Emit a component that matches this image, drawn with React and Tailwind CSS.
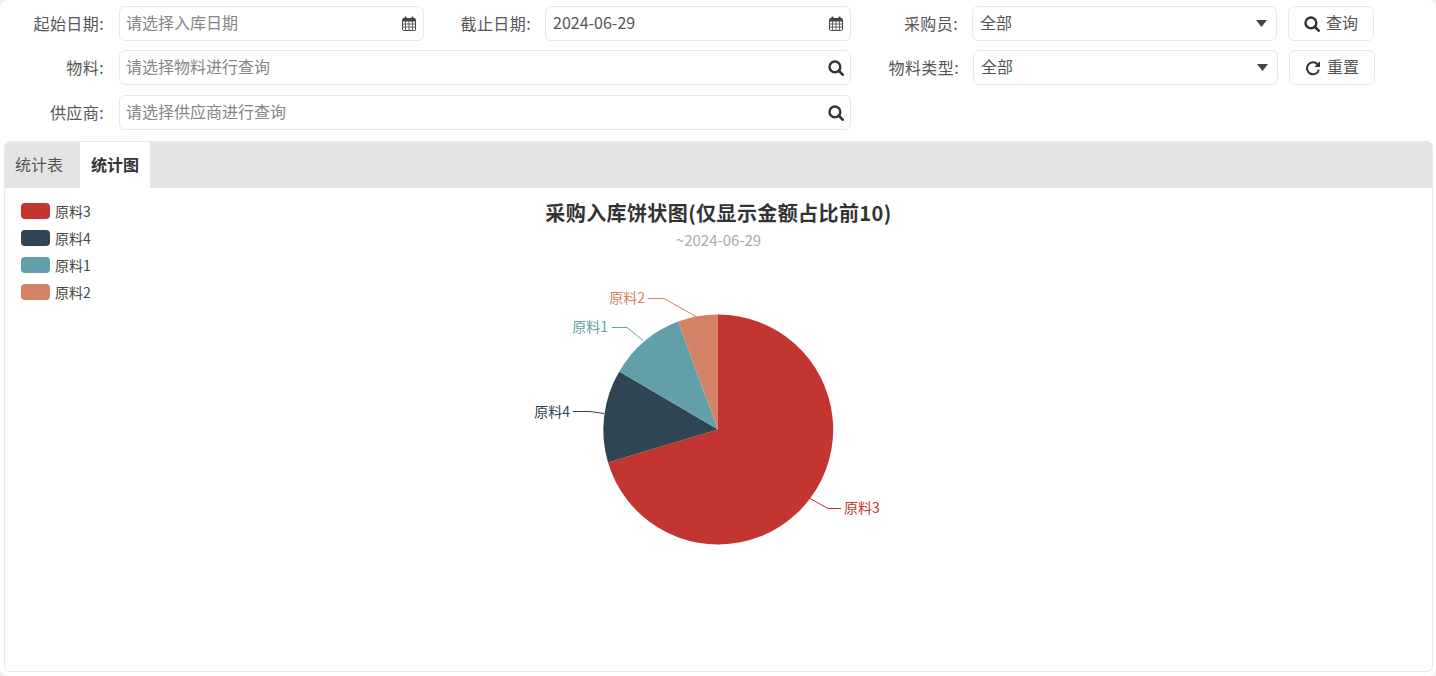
import React from 'react';

const fontStack = { fontFamily: '"Noto Sans CJK SC", "Liberation Sans", sans-serif' };

const legendItems = [
  { name: '原料3', color: '#c23531' },
  { name: '原料4', color: '#2f4554' },
  { name: '原料1', color: '#61a0a8' },
  { name: '原料2', color: '#d48265' },
];

const Label = ({ text, className = 'w-[104px]' }) => (
  <label className={`${className} shrink-0 mb-[2px] text-right text-[16px] tracking-[0.4px] text-[#555]`}>{text}:</label>
);

const Field = ({ value, placeholder, icon, className = '' }) => (
  <div className={`h-[35px] flex items-center justify-between pl-[6px] pr-[6px] bg-white border border-[#e8e8e8] rounded-[6px] ${className}`}>
    <span className={`mb-[3px] text-[16px] ${value ? 'ml-[1px] text-[#555]' : 'text-[#858585]'}`}>{value || placeholder}</span>
    {icon}
  </div>
);

const Caret = () => (
  <svg width="11" height="7" viewBox="0 0 11 7" className="mr-[3px]">
    <path d="M0 0 H11 L5.5 7 Z" fill="#444" />
  </svg>
);

const Calendar = () => (
  <svg width="14" height="15" viewBox="0 0 14 15" className="mr-[1px]">
    <rect x="0.5" y="2.5" width="13" height="12" rx="1" fill="#fff" stroke="#444" />
    <rect x="1" y="2.5" width="12" height="3" fill="#444" />
    <path d="M0.5 8 H13.5 M0.5 11 H13.5 M3.5 5 V14.5 M7 5 V14.5 M10.5 5 V14.5" stroke="#555" strokeWidth="0.9" fill="none" />
    <rect x="2.5" y="0.5" width="2" height="3.5" rx="0.8" fill="#444" />
    <rect x="9.5" y="0.5" width="2" height="3.5" rx="0.8" fill="#444" />
  </svg>
);

// font-awesome 4 style search, ring thicker than the one in the icon packages
const SearchIcon = () => (
  <svg width="16" height="16" viewBox="0 0 16 16">
    <circle cx="6.9" cy="6.9" r="5.4" fill="none" stroke="#333" strokeWidth="2.4" />
    <path d="M11 11 L14.7 14.7" stroke="#333" strokeWidth="2.6" strokeLinecap="round" />
  </svg>
);

const RedoIcon = () => (
  <svg width="16" height="16" viewBox="0 0 16 16">
    <path d="M12.6 4.4 A6 6 0 1 0 13.9 9.6" fill="none" stroke="#333" strokeWidth="2" />
    <path d="M15 1.2 V7 H9.4 Z" fill="#333" />
  </svg>
);

const Btn = ({ icon, text, className = '' }) => (
  <button className={`h-[35px] w-[86px] flex items-center justify-center gap-[6px] bg-white border border-[#e8e8e8] rounded-[6px] text-[#555] ${className}`}>
    {icon}
    <span className="mb-[3px] text-[16px]">{text}</span>
  </button>
);

const Pie = () => (
  <svg width="401" height="300" viewBox="0 0.5 401 300" className="block mx-auto mt-[22px]">
    <path d="M200 158 L200 43 A115 115 0 1 1 90 191 Z" fill="#c23531" />
    <path d="M200 158 L90 191 A115 115 0 0 1 101.3 100 Z" fill="#2f4554" />
    <path d="M200 158 L101.3 100 A115 115 0 0 1 160 50 Z" fill="#61a0a8" />
    <path d="M200 158 L160 50 A115 115 0 0 1 200 43 Z" fill="#d48265" />

    <path d="M292 227 L310 237 H323" fill="none" stroke="#c23531" />
    <path d="M86 142 L72 140 H55" fill="none" stroke="#2f4554" />
    <path d="M125 69 L109 56 H94" fill="none" stroke="#61a0a8" />
    <path d="M178 45 L146 27 H130" fill="none" stroke="#d48265" />

    <text x="326" y="241" fontSize="14" fill="#c23531">原料3</text>
    <text x="52" y="145" fontSize="14" fill="#2f4554" textAnchor="end">原料4</text>
    <text x="90" y="60" fontSize="14" fill="#61a0a8" textAnchor="end">原料1</text>
    <text x="127" y="31" fontSize="14" fill="#d48265" textAnchor="end">原料2</text>
  </svg>
);

const App = () => {
  return (
    <div style={fontStack} className="w-[1436px] h-[676px] overflow-hidden bg-[#f0f0f0]">
      <div className="h-full bg-white rounded-[8px] overflow-hidden">
        <div className="pt-[6px] flex flex-col gap-[9px]">
          <div className="flex items-center">
            <Label text="起始日期" />
            <Field placeholder="请选择入库日期" icon={<Calendar />} className="w-[305px] ml-[15px]" />
            <Label text="截止日期" className="w-[107px]" />
            <Field value="2024-06-29" icon={<Calendar />} className="w-[306px] ml-[14px]" />
            <Label text="采购员" className="w-[107px]" />
            <Field value="全部" icon={<Caret />} className="w-[305px] ml-[14px]" />
            <Btn icon={<SearchIcon />} text="查询" className="ml-[11px]" />
          </div>
          <div className="flex items-center">
            <Label text="物料" />
            <Field placeholder="请选择物料进行查询" icon={<SearchIcon />} className="w-[732px] ml-[15px]" />
            <Label text="物料类型" className="w-[108px]" />
            <Field value="全部" icon={<Caret />} className="w-[305px] ml-[14px]" />
            <Btn icon={<RedoIcon />} text="重置" className="ml-[11px]" />
          </div>
          <div className="flex items-center mt-[1px]">
            <Label text="供应商" />
            <Field placeholder="请选择供应商进行查询" icon={<SearchIcon />} className="w-[732px] ml-[15px]" />
          </div>
        </div>

        <div className="mx-[4px] mt-[11px] h-[531px] w-[1429px] border border-[#e8e8e8] rounded-[6px] overflow-hidden">
          <div className="h-[46px] flex bg-[#e4e4e4]">
            <div className="w-[75px] flex items-center pl-[10px] text-[16px] text-[#555]"><span className="mb-[2px]">统计表</span></div>
            <div className="w-[70px] flex items-center justify-center bg-white text-[16px] font-bold text-[#333]"><span className="mb-[2px]">统计图</span></div>
          </div>
          <div className="relative pt-[12px]">
            <h2 className="text-center text-[20px] leading-[26px] font-bold tracking-[0.4px] text-[#333]">采购入库饼状图(仅显示金额占比前10)</h2>
            <p className="mt-[4px] text-center text-[15px] leading-[20px] text-[#aaa]">~2024-06-29</p>
            <Pie />
            <ul className="absolute left-[16px] top-[13px] flex flex-col gap-[7px]">
              {legendItems.map((item) => (
                <li key={item.name} className="h-[20px] flex items-center gap-[5px] text-[14px] text-[#444]">
                  <span className="w-[29px] h-[16px] rounded-[4px]" style={{ backgroundColor: item.color }} />
                  {item.name}
                </li>
              ))}
            </ul>
          </div>
        </div>
      </div>
    </div>
  );
};

export default App;
